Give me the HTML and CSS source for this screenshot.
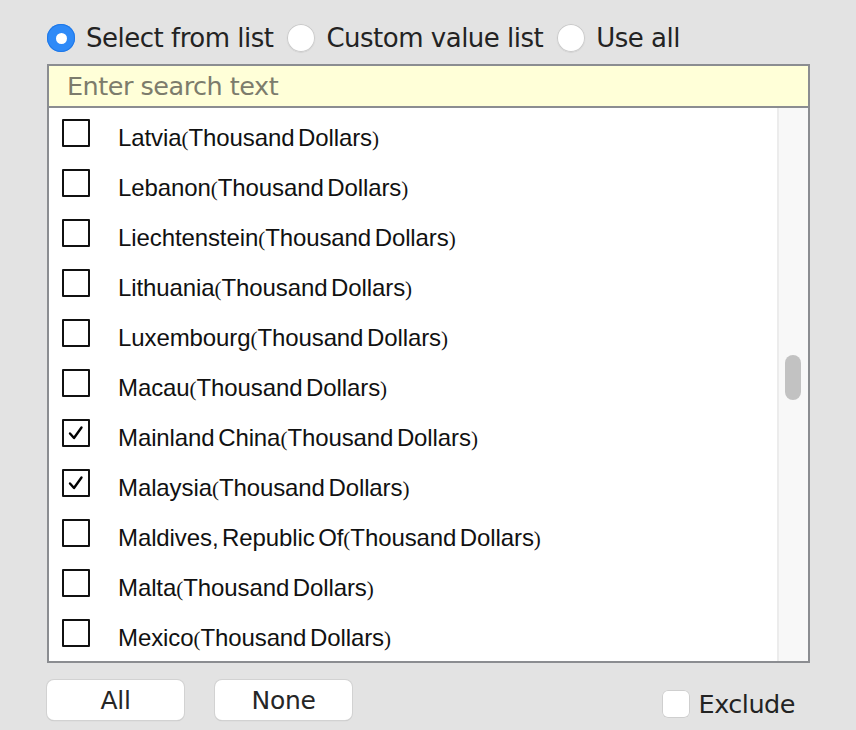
FILE: index.html
```html
<!DOCTYPE html>
<html>
<head>
<meta charset="utf-8">
<link rel="stylesheet" href="styles.css">
</head>
<body>
<div class="panel">
  <div class="modes">
    <label class="mode"><span class="radio on"></span><span class="mode-text">Select from list</span></label>
    <label class="mode"><span class="radio"></span><span class="mode-text">Custom value list</span></label>
    <label class="mode"><span class="radio"></span><span class="mode-text">Use all</span></label>
  </div>
  <div class="listbox">
    <div class="search">Enter search text</div>
    <div class="list-area">
      <div class="rows">
        <div class="row"><span class="cb"></span><span class="name">Latvia<span class="p">(</span>Thousand Dollars<span class="p">)</span></span></div>
        <div class="row"><span class="cb"></span><span class="name">Lebanon<span class="p">(</span>Thousand Dollars<span class="p">)</span></span></div>
        <div class="row"><span class="cb"></span><span class="name">Liechtenstein<span class="p">(</span>Thousand Dollars<span class="p">)</span></span></div>
        <div class="row"><span class="cb"></span><span class="name">Lithuania<span class="p">(</span>Thousand Dollars<span class="p">)</span></span></div>
        <div class="row"><span class="cb"></span><span class="name">Luxembourg<span class="p">(</span>Thousand Dollars<span class="p">)</span></span></div>
        <div class="row"><span class="cb"></span><span class="name">Macau<span class="p">(</span>Thousand Dollars<span class="p">)</span></span></div>
        <div class="row"><span class="cb checked"><svg viewBox="0 0 28 28" width="28" height="28"><path d="M8 14.5 L12 19 L19.5 8.5" fill="none" stroke="#000" stroke-width="2.4" stroke-linecap="round" stroke-linejoin="round"/></svg></span><span class="name">Mainland China<span class="p">(</span>Thousand Dollars<span class="p">)</span></span></div>
        <div class="row"><span class="cb checked"><svg viewBox="0 0 28 28" width="28" height="28"><path d="M8 14.5 L12 19 L19.5 8.5" fill="none" stroke="#000" stroke-width="2.4" stroke-linecap="round" stroke-linejoin="round"/></svg></span><span class="name">Malaysia<span class="p">(</span>Thousand Dollars<span class="p">)</span></span></div>
        <div class="row"><span class="cb"></span><span class="name">Maldives, Republic Of<span class="p">(</span>Thousand Dollars<span class="p">)</span></span></div>
        <div class="row"><span class="cb"></span><span class="name">Malta<span class="p">(</span>Thousand Dollars<span class="p">)</span></span></div>
        <div class="row"><span class="cb"></span><span class="name">Mexico<span class="p">(</span>Thousand Dollars<span class="p">)</span></span></div>
      </div>
      <div class="scrollbar"><div class="thumb"></div></div>
    </div>
  </div>
  <div class="footer">
    <button class="btn">All</button>
    <button class="btn">None</button>
    <div class="spacer"></div>
    <label class="exclude"><span class="excb"></span><span class="ex-text">Exclude</span></label>
  </div>
</div>
</body>
</html>
```
FILE: styles.css
```css
html, body {
  margin: 0;
  padding: 0;
  background: #e3e3e3;
  width: 856px;
  height: 730px;
  overflow: hidden;
}
.panel {
  padding: 22px 46px 0 47px;
  font-family: "DejaVu Sans", sans-serif;
  color: #222;
}
.modes {
  display: flex;
  align-items: center;
  height: 32px;
  gap: 14px;
}
.mode {
  display: flex;
  align-items: center;
  gap: 11px;
}
.mode-text {
  font-size: 26px;
  letter-spacing: -0.5px;
  line-height: 32px;
  color: #232323;
}
.radio {
  width: 28px;
  height: 28px;
  border-radius: 50%;
  background: #fff;
  box-shadow: inset 0 0 0 1px #cacaca, 0 0.5px 1px rgba(0,0,0,0.12);
  box-sizing: border-box;
  display: inline-block;
  position: relative;
  flex: none;
}
.radio.on {
  background: #2f8af7;
  box-shadow: inset 0 0 0 1px #1f78e8;
}
.radio.on::after {
  content: "";
  position: absolute;
  left: 8.5px;
  top: 8.5px;
  width: 11px;
  height: 11px;
  border-radius: 50%;
  background: #fff;
}
.listbox {
  margin-top: 10px;
  border: 2px solid #8b8d91;
  width: 763px;
  box-sizing: border-box;
  background: #fff;
}
.search {
  height: 40px;
  background: #ffffd8;
  border-bottom: 2px solid #8b8d91;
  padding-left: 18px;
  font-size: 25.5px;
  letter-spacing: -0.5px;
  line-height: 40px;
  color: #7c7c6c;
}
.list-area {
  display: flex;
  height: 553px;
}
.rows {
  flex: 1;
  padding-top: 5px;
  overflow: hidden;
}
.row {
  display: flex;
  align-items: center;
  height: 50px;
  padding-left: 13px;
}
.cb {
  width: 28px;
  height: 28px;
  border: 2px solid #111;
  box-sizing: border-box;
  display: inline-flex;
  align-items: center;
  justify-content: center;
  border-radius: 1px;
  flex: none;
  margin-bottom: 10px;
}
.cb svg {
  display: block;
  margin: -2px;
}
.name {
  margin-left: 28px;
  font-family: "Liberation Sans", Arial, sans-serif;
  font-size: 24px;
  color: #111;
  word-spacing: -3px;
  letter-spacing: -0.1px;
  white-space: nowrap;
}
.p {
  font-family: "Liberation Serif", serif;
  font-size: 21px;
  letter-spacing: 0;
}
.scrollbar {
  width: 29px;
  flex: none;
  background: #f8f8f8;
  border-left: 2px solid #ececec;
  position: relative;
}
.thumb {
  position: absolute;
  left: 6px;
  top: 247px;
  width: 16px;
  height: 45px;
  border-radius: 8px;
  background: #c2c2c2;
}
.footer {
  display: flex;
  align-items: center;
  margin-top: 17px;
  gap: 31px;
}
.btn {
  width: 137px;
  height: 40px;
  border: none;
  border-radius: 7px;
  background: #fff;
  box-shadow: 0 0 0 1px #d2d2d2, 0 1px 1px rgba(0,0,0,0.2);
  font-family: "DejaVu Sans", sans-serif;
  font-size: 25px;
  letter-spacing: -0.3px;
  color: #262626;
  padding: 0;
}
.spacer {
  flex: 1;
}
.exclude {
  display: flex;
  align-items: center;
  gap: 9px;
  margin-top: 7px;
  margin-right: 15px;
}
.excb {
  width: 28px;
  height: 28px;
  border-radius: 6px;
  background: #fff;
  box-shadow: inset 0 0 0 1px #cfcfcf;
  display: inline-block;
}
.ex-text {
  font-size: 25.5px;
  letter-spacing: -0.5px;
  color: #232323;
}
```
